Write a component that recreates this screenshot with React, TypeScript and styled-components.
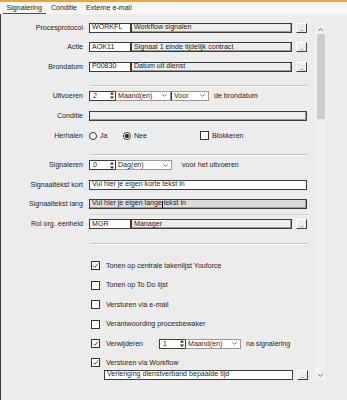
import React from 'react';
import styled, { createGlobalStyle } from 'styled-components';

const GlobalStyle = createGlobalStyle`
  html, body {
    margin: 0;
    padding: 0;
    background: #ececec;
  }
  body {
    font-family: "Liberation Sans", Arial, sans-serif;
    font-size: 7.1px;
    color: #1e1e1e;
  }
`;

const Window = styled.div`
  width: 347px;
  height: 400px;
  display: flex;
  flex-direction: column;
  overflow: hidden;
  background: #ececec;
`;

const TopLine = styled.div`
  height: 2px;
  background: #f0a436;
`;

const TabStrip = styled.div`
  height: 12px;
  display: flex;
  align-items: stretch;
  gap: 1px;
  padding-left: 2.5px;
  background: #f6f6f6;
`;

const Tab = styled.div<{ $active?: boolean }>`
  display: flex;
  align-items: center;
  padding: 0 4px;
  box-sizing: border-box;
  border-bottom: 1px solid ${(p) => (p.$active ? '#e0141e' : 'transparent')};
`;

const Main = styled.div`
  flex: 1;
  display: flex;
`;

const Panel = styled.div`
  width: 312px;
  border-left: 1px solid #3c3c3c;
  padding-top: 4px;
  display: flex;
  flex-direction: column;
`;

const Row = styled.div<{ $h?: number }>`
  height: ${(p) => p.$h ?? 19.5}px;
  display: grid;
  grid-template-columns: 82px 218px;
  column-gap: 6px;
  align-items: center;
`;

const Label = styled.div`
  text-align: right;
  white-space: nowrap;
`;

const Fields = styled.div`
  display: flex;
  align-items: center;
  height: 10px;
`;

const Box = styled.div<{ $w?: number; $tone?: 'white' | 'grey' | 'dark' }>`
  height: 10px;
  box-sizing: border-box;
  ${(p) => (p.$w ? `width: ${p.$w}px; flex: none;` : 'flex: 1;')}
  background: ${(p) => (p.$tone === 'white' ? '#ffffff' : p.$tone === 'dark' ? '#dcdcdc' : '#ececec')};
  border: 1px solid #3a3a3a;
  box-shadow: ${(p) => (p.$tone === 'white' ? 'none' : 'inset -1px -1px 0 #9a9a9a')};
  padding: 0 2px;
  display: flex;
  align-items: center;
  white-space: nowrap;
  overflow: hidden;
  line-height: 1;
`;

const Caret = styled.span`
  display: inline-block;
  width: 1px;
  height: 7px;
  background: #111;
  margin: 0 0 0 0.5px;
`;

const DotsButton = styled.div`
  width: 11px;
  height: 10px;
  flex: none;
  margin-left: 4px;
  box-sizing: border-box;
  background: #ececec;
  border-top: 1px solid #ffffff;
  border-left: 1px solid #ffffff;
  border-right: 1px solid #3a3a3a;
  border-bottom: 1px solid #3a3a3a;
  display: flex;
  align-items: flex-end;
  justify-content: center;
  font-size: 6px;
  line-height: 6px;
  letter-spacing: -0.5px;
`;

const Separator = styled.div<{ $top: number; $bottom: number }>`
  margin: ${(p) => p.$top}px 0 ${(p) => p.$bottom}px 89px;
  width: 218px;
  height: 1px;
  background: #c6c6c6;
  box-shadow: 0 1px 0 #f8f8f8;
`;

const Spin = styled.div`
  width: 26px;
  height: 10px;
  flex: none;
  box-sizing: border-box;
  background: #fff;
  border: 1px solid #3a3a3a;
  border-right: none;
  display: flex;
  align-items: center;
  justify-content: space-between;
  padding: 0 1px 0 3px;
`;

const Select = styled.div<{ $w: number }>`
  width: ${(p) => p.$w}px;
  height: 10px;
  flex: none;
  box-sizing: border-box;
  background: #fff;
  border: 1px solid #9a9a9a;
  border-left: 1px solid #3a3a3a;
  display: flex;
  align-items: center;
  justify-content: space-between;
  padding: 0 3px 0 2px;
`;

const Text = styled.span<{ $ml?: number }>`
  margin-left: ${(p) => p.$ml ?? 0}px;
  white-space: nowrap;
`;

const RadioCircle = styled.span<{ $on?: boolean }>`
  width: 8px;
  height: 8px;
  box-sizing: border-box;
  border-radius: 50%;
  border: 1px solid #333;
  background: #fff;
  display: inline-flex;
  align-items: center;
  justify-content: center;
  flex: none;
  &::after {
    content: '';
    width: 4px;
    height: 4px;
    border-radius: 50%;
    background: ${(p) => (p.$on ? '#1a1a1a' : 'transparent')};
  }
`;

const Option = styled.label<{ $w: number }>`
  width: ${(p) => p.$w}px;
  display: flex;
  align-items: center;
  gap: 3px;
  flex: none;
`;

const CheckSquare = styled.span`
  width: 9px;
  height: 9px;
  box-sizing: border-box;
  border: 1px solid #333;
  background: #fff;
  display: inline-flex;
  align-items: center;
  justify-content: center;
  flex: none;
`;

const CheckList = styled.div`
  display: flex;
  flex-direction: column;
  padding-left: 90px;
  margin-top: 12px;
`;

const CheckRow = styled.div<{ $h?: number; $pt?: number }>`
  height: ${(p) => p.$h ?? 19.5}px;
  box-sizing: border-box;
  padding-top: ${(p) => p.$pt ?? 0}px;
  display: flex;
  align-items: center;
`;

const CheckText = styled.span<{ $w?: number }>`
  margin-left: 6px;
  white-space: nowrap;
  ${(p) => (p.$w ? `width: ${p.$w}px;` : '')}
`;

const WorkflowInput = styled.div`
  display: flex;
  align-items: center;
  margin-left: 13px;
  height: 11px;
`;

const FaintLine = styled.div`
  height: 1px;
  margin-left: 89px;
  width: 218px;
  background: #d8d8d8;
`;

const ScrollTrack = styled.div`
  width: 11px;
  height: 355px;
  margin: 11px 0 0 2px;
  background: #f0f0f0;
  display: flex;
  flex-direction: column;
  align-items: center;
`;

const ScrollArrow = styled.div`
  height: 9px;
  width: 11px;
  display: flex;
  align-items: center;
  justify-content: center;
`;

const Thumb = styled.div`
  width: 8px;
  height: 85px;
  background: #cdcdcd;
`;

const ScrollGap = styled.div`
  flex: 1;
`;

const Chevron = ({ up }: { up?: boolean }) => (
  <svg width="5" height="3" viewBox="0 0 5 3">
    <path
      d={up ? 'M0.5 2.6 L2.5 0.6 L4.5 2.6' : 'M0.5 0.4 L2.5 2.4 L4.5 0.4'}
      fill="none"
      stroke="#555"
      strokeWidth="0.9"
    />
  </svg>
);

const SpinArrows = () => (
  <svg width="4" height="7" viewBox="0 0 4 7">
    <path d="M2 0 L4 2.6 L0 2.6 Z M2 7 L4 4.4 L0 4.4 Z" fill="#222" />
  </svg>
);

const Tick = () => (
  <svg width="7" height="7" viewBox="0 0 7 7">
    <path d="M1 3.6 L2.8 5.4 L6 1.4" fill="none" stroke="#444" strokeWidth="0.9" />
  </svg>
);

const Check = ({ on }: { on?: boolean }) => <CheckSquare>{on && <Tick />}</CheckSquare>;

const Dots = () => <DotsButton>...</DotsButton>;

const Lookup = ({ code, desc }: { code: string; desc: string }) => (
  <Fields>
    <Box $w={42} $tone="white">{code}</Box>
    <Box>{desc}</Box>
    <Dots />
  </Fields>
);

const SpinSelect = ({ value, unit, unitW }: { value: string; unit: string; unitW: number }) => (
  <>
    <Spin>
      <span>{value}</span>
      <SpinArrows />
    </Spin>
    <Select $w={unitW}>
      <span>{unit}</span>
      <Chevron />
    </Select>
  </>
);

export default function App() {
  return (
    <Window>
      <GlobalStyle />
      <TopLine />
      <TabStrip>
        <Tab $active>Signalering</Tab>
        <Tab>Conditie</Tab>
        <Tab>Externe e-mail</Tab>
      </TabStrip>
      <Main>
        <Panel>
          <Row>
            <Label>Procesprotocol</Label>
            <Lookup code="WORKFL" desc="Workflow signalen" />
          </Row>
          <Row>
            <Label>Actie</Label>
            <Lookup code="AOK11" desc="Signaal 1 einde tijdelijk contract" />
          </Row>
          <Row>
            <Label>Brondatum</Label>
            <Lookup code="P00830" desc="Datum uit dienst" />
          </Row>

          <Separator $top={8} $bottom={0} />

          <Row $h={20}>
            <Label>Uitvoeren</Label>
            <Fields>
              <SpinSelect value="2" unit="Maand(en)" unitW={56} />
              <Select $w={38}>
                <span>Voor</span>
                <Chevron />
              </Select>
              <Text $ml={5}>de brondatum</Text>
            </Fields>
          </Row>
          <Row $h={20}>
            <Label>Conditie</Label>
            <Fields>
              <Box />
            </Fields>
          </Row>
          <Row $h={20}>
            <Label>Herhalen</Label>
            <Fields>
              <Option $w={34}>
                <RadioCircle />
                <span>Ja</span>
              </Option>
              <Option $w={77}>
                <RadioCircle $on />
                <span>Nee</span>
              </Option>
              <Option $w={80}>
                <Check />
                <span>Blokkeren</span>
              </Option>
            </Fields>
          </Row>

          <Separator $top={8} $bottom={1} />

          <Row>
            <Label>Signaleren</Label>
            <Fields>
              <SpinSelect value="0" unit="Dag(en)" unitW={57} />
              <Text $ml={10}>voor het uitvoeren</Text>
            </Fields>
          </Row>
          <Row>
            <Label>Signaaltekst kort</Label>
            <Fields>
              <Box $tone="white">Vul hier je eigen korte tekst in</Box>
            </Fields>
          </Row>
          <Row $h={19}>
            <Label>Signaaltekst lang</Label>
            <Fields>
              <Box $tone="dark">
                Vul hier je eigen lange <Caret />tekst in
              </Box>
            </Fields>
          </Row>
          <FaintLine />
          <Row $h={19.5}>
            <Label>Rol org. eenheid</Label>
            <Lookup code="MGR" desc="Manager" />
          </Row>

          <Separator $top={9} $bottom={0} />

          <CheckList>
            <CheckRow>
              <Check on />
              <CheckText>Tonen op centrale takenlijst Youforce</CheckText>
            </CheckRow>
            <CheckRow>
              <Check />
              <CheckText>Tonen op To Do lijst</CheckText>
            </CheckRow>
            <CheckRow>
              <Check />
              <CheckText>Versturen via e-mail</CheckText>
            </CheckRow>
            <CheckRow>
              <Check />
              <CheckText>Verantwoording procesbewaker</CheckText>
            </CheckRow>
            <CheckRow>
              <Check on />
              <CheckText $w={53}>Verwijderen</CheckText>
              <SpinSelect value="1" unit="Maand(en)" unitW={56} />
              <Text $ml={5}>na signalering</Text>
            </CheckRow>
            <CheckRow $h={16} $pt={2.5}>
              <Check on />
              <CheckText>Versturen via Workflow</CheckText>
            </CheckRow>
            <WorkflowInput>
              <Box $w={189} $tone="white">Verlenging dienstverband bepaalde tijd</Box>
              <Dots />
            </WorkflowInput>
          </CheckList>
        </Panel>
        <ScrollTrack>
          <ScrollArrow>
            <Chevron up />
          </ScrollArrow>
          <Thumb />
          <ScrollGap />
          <ScrollArrow>
            <Chevron />
          </ScrollArrow>
        </ScrollTrack>
      </Main>
    </Window>
  );
}
